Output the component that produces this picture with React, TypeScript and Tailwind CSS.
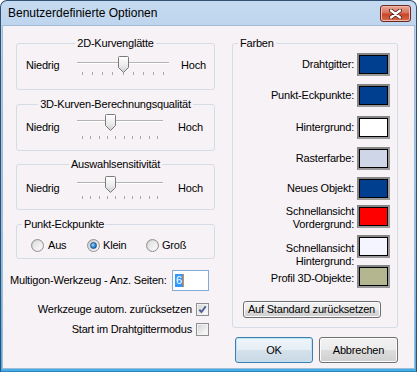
import React from 'react'

const groupTitleBg = 'bg-[#f7f2f6]'

function Group({ title, center, className, children }: { title: string; center?: boolean; className: string; children: React.ReactNode }) {
  return (
    <div className={`rounded-[3px] border border-[#d3dde4] ${className}`}>
      <div className={`-mt-[7px] flex ${center ? 'justify-center' : 'pl-[5px]'}`}>
        <span className={`${groupTitleBg} px-[2px] leading-[13px]`}>{title}</span>
      </div>
      {children}
    </div>
  )
}

function Thumb() {
  return (
    <svg width="11" height="17" viewBox="0 0 11 17">
      <defs>
        <linearGradient id="thumbFill" x1="0" y1="0" x2="0" y2="1">
          <stop offset="0" stopColor="#ffffff" />
          <stop offset="0.55" stopColor="#ececec" />
          <stop offset="1" stopColor="#cfcfcf" />
        </linearGradient>
      </defs>
      <path d="M1.5 0.5 H9.5 Q10.5 0.5 10.5 1.5 V11.5 L5.5 16.5 L0.5 11.5 V1.5 Q0.5 0.5 1.5 0.5 Z" fill="url(#thumbFill)" stroke="#7b7b7b" />
    </svg>
  )
}

type SliderRow = {
  title: string
  box: string
  pt: string
  width: string
  thumb: string
  ticks: number
  tickGap: string
  labelMt: string
  hochMl: string
}

const sliders: SliderRow[] = [
  { title: '2D-Kurvenglätte', box: 'mt-[17px] h-[47px]', pt: 'pt-[6px]', width: 'w-[92px]', thumb: 'left-[41px]', ticks: 9, tickGap: 'mt-0', labelMt: 'mt-[3px]', hochMl: 'ml-[12px]' },
  { title: '3D-Kurven-Berechnungsqualität', box: 'mt-[14px] h-[47px]', pt: 'pt-[3px]', width: 'w-[86px]', thumb: 'left-[28px]', ticks: 10, tickGap: 'mt-[6px]', labelMt: 'mt-[7px]', hochMl: 'ml-[15px]' },
  { title: 'Auswahlsensitivität', box: 'mt-[13px] h-[46px]', pt: 'pt-[5px]', width: 'w-[86px]', thumb: 'left-[28px]', ticks: 10, tickGap: 'mt-[4px]', labelMt: 'mt-[6px]', hochMl: 'ml-[15px]' },
]

function Slider({ s }: { s: SliderRow }) {
  return (
    <div className={s.width}>
      <div className="relative h-[16px]">
        <div className="absolute left-0 right-0 top-[6px] h-[2px] border-t border-[#b3b3b3] bg-white" />
        <div className={`absolute top-0 ${s.thumb}`}>
          <Thumb />
        </div>
      </div>
      <div className={`flex justify-between px-[5px] ${s.tickGap}`}>
        {Array.from({ length: s.ticks }).map((_, i) => (
          <span key={i} className="h-[3px] w-px bg-[#a9a9a9]" />
        ))}
      </div>
    </div>
  )
}

function Radio({ checked }: { checked?: boolean }) {
  return (
    <span className="flex h-[13px] w-[13px] items-center justify-center rounded-full border border-[#929292] bg-[linear-gradient(135deg,#c9cacb,#f8f8f8)]">
      {checked ? (
        <span className="h-[7px] w-[7px] rounded-full border border-[#1b4f8e] bg-[radial-gradient(circle_at_35%_35%,#9ad9ff,#1d74c6_70%)]" />
      ) : (
        <span className="h-[9px] w-[9px] rounded-full bg-[linear-gradient(135deg,#dedede,#fbfbfb)]" />
      )}
    </span>
  )
}

function Checkbox({ checked }: { checked?: boolean }) {
  return (
    <span className="flex h-[13px] w-[13px] items-center justify-center border border-[#8f8f8f] bg-white">
      <span className="flex h-[11px] w-[11px] items-center justify-center border border-[#f2f2f2] bg-[linear-gradient(135deg,#d6d6d6,#fbfbfb)]">
        {checked && (
          <svg width="9" height="9" viewBox="0 0 9 9">
            <path d="M1.3 4.6 L3.4 7 L7.7 1.4" fill="none" stroke="#4a5f97" strokeWidth="1.9" />
          </svg>
        )}
      </span>
    </span>
  )
}

const colors = [
  { label: ['Drahtgitter:'], fill: 'bg-[#003f8f]', mt: 'mt-[3px]', labelCls: '' },
  { label: ['Punkt-Eckpunkte:'], fill: 'bg-[#003f8f]', mt: 'mt-[8px]', labelCls: '' },
  { label: ['Hintergrund:'], fill: 'bg-white', mt: 'mt-[9px]', labelCls: '' },
  { label: ['Rasterfarbe:'], fill: 'bg-[#ced6e7]', mt: 'mt-[8px]', labelCls: '' },
  { label: ['Neues Objekt:'], fill: 'bg-[#003f8f]', mt: 'mt-[7px]', labelCls: '' },
  { label: ['Schnellansicht', 'Vordergrund:'], fill: 'bg-[#ff0000]', mt: 'mt-[5px]', labelCls: 'mt-[3px]' },
  { label: ['Schnellansicht', 'Hintergrund:'], fill: 'bg-[#f4f5ff]', mt: 'mt-[7px]', labelCls: 'mt-[16px]' },
  { label: ['Profil 3D-Objekte:'], fill: 'bg-[#b4b68f]', mt: 'mt-[7px]', labelCls: 'mt-[4px]' },
]

function Swatch({ fill }: { fill: string }) {
  return (
    <span className="flex h-[23px] w-[33px] border-2 border-[#858585] border-r-[#9a9a9a] border-b-[#9a9a9a]">
      <span className={`flex-1 border border-black ${fill}`} />
    </span>
  )
}

function CloseButton() {
  return (
    <div className="flex h-[17px] w-[31px] items-center justify-center rounded-[3px] border border-[#6b2a1f] bg-[linear-gradient(#e9a899,#d8735c_45%,#c9452a_55%,#d66a4a)] shadow-[inset_0_0_0_1px_#f0b9ab]">
      <svg width="13" height="10" viewBox="0 0 13 10">
        <path d="M2 1.5 L11 8.5 M11 1.5 L2 8.5" stroke="#4a1a12" strokeWidth="4" strokeLinecap="round" />
        <path d="M2 1.5 L11 8.5 M11 1.5 L2 8.5" stroke="#ffffff" strokeWidth="2.4" strokeLinecap="round" />
      </svg>
    </div>
  )
}

export default function App() {
  return (
    <div className="flex h-[372px] w-[417px] flex-col rounded-t-[7px] border border-[#2f4f73] border-b-[#2a86c2] bg-[linear-gradient(#c5daf0,#b0cbe8_20%,#8bbbe6_70%,#45aee4)] px-[1px] pb-[2px] font-['Liberation_Sans',Arial,sans-serif] text-[11px] leading-[13px] tracking-[-0.2px] text-black">
      {/* title bar */}
      <div className="flex h-[24px] items-center justify-between pl-[6px] pr-[4px] pt-[1px]">
        <span className="text-[12px] tracking-normal">Benutzerdefinierte Optionen</span>
        <CloseButton />
      </div>

      {/* dialog body */}
      <div className="flex flex-1 items-start border border-[#9fbcd9] bg-[#f7f2f6] pl-[13px]">
        {/* left column */}
        <div className="flex w-[199px] flex-col">
          {sliders.map((s) => (
            <Group key={s.title} title={s.title} center className={s.box}>
              <div className={`flex items-start pl-[9px] ${s.pt}`}>
                <span className={`w-[51px] ${s.labelMt}`}>Niedrig</span>
                <Slider s={s} />
                <span className={`${s.hochMl} ${s.labelMt}`}>Hoch</span>
              </div>
            </Group>
          ))}

          <Group title="Punkt-Eckpunkte" className="mt-[14px] h-[35px]">
            <div className="flex items-center pl-[14px] pt-[8px]">
              <span className="flex w-[56px] items-center gap-[4px]">
                <Radio />
                Aus
              </span>
              <span className="flex w-[59px] items-center gap-[3px]">
                <Radio checked />
                Klein
              </span>
              <span className="flex items-center gap-[3px]">
                <Radio />
                Groß
              </span>
            </div>
          </Group>

          <div className="-ml-[6px] mt-[11px] flex w-[199px] items-center justify-between">
            <span>Multigon-Werkzeug - Anz. Seiten:</span>
            <span className="flex h-[21px] w-[37px] items-center border border-[#86a9d3] bg-white pl-[2px]">
              <span className="border-r border-[#ff8a00] bg-[#3399ff] px-[1px] text-white">6</span>
            </span>
          </div>

          <div className="-ml-[6px] mt-[12px] flex w-[199px] items-center justify-end gap-[4px]">
            <span>Werkzeuge autom. zurücksetzen</span>
            <Checkbox checked />
          </div>
          <div className="-ml-[6px] mt-[7px] flex w-[199px] items-center justify-end gap-[4px]">
            <span>Start im Drahtgittermodus</span>
            <Checkbox />
          </div>
        </div>

        {/* right column */}
        <div className="ml-[17px] flex w-[166px] flex-col">
          <Group title="Farben" className="mt-[17px] h-[285px]">
            <div className="flex flex-col pr-[7px]">
              {colors.map((c) => (
                <div key={c.label.join(' ')} className={`flex h-[23px] items-center justify-end gap-[3px] ${c.mt}`}>
                  <span className={`text-right ${c.labelCls}`}>
                    {c.label.map((l) => (
                      <span key={l} className="block">{l}</span>
                    ))}
                  </span>
                  <Swatch fill={c.fill} />
                </div>
              ))}
              <button className="mx-auto mt-[13px] flex h-[17px] w-[138px] items-center justify-center rounded-[3px] border border-[#707070] bg-[linear-gradient(#f2f2f2,#ebebeb_50%,#dddddd_50%,#cfcfcf)] shadow-[inset_0_0_0_1px_#fbfbfb]">
                Auf Standard zurücksetzen
              </button>
            </div>
          </Group>

          <div className="mt-[9px] flex justify-end gap-[6px]">
            <button className="flex h-[26px] w-[78px] items-center justify-center rounded-[3px] border border-[#3c7fb1] bg-[linear-gradient(#eef5fa,#e5eef5_50%,#d5e2ec_50%,#c9d9e5)] shadow-[inset_0_0_0_1px_#bfe3f6]">
              OK
            </button>
            <button className="flex h-[26px] w-[79px] items-center justify-center rounded-[3px] border border-[#707070] bg-[linear-gradient(#f2f2f2,#ebebeb_50%,#dddddd_50%,#cfcfcf)] shadow-[inset_0_0_0_1px_#fbfbfb]">
              Abbrechen
            </button>
          </div>
        </div>
      </div>
    </div>
  )
}
